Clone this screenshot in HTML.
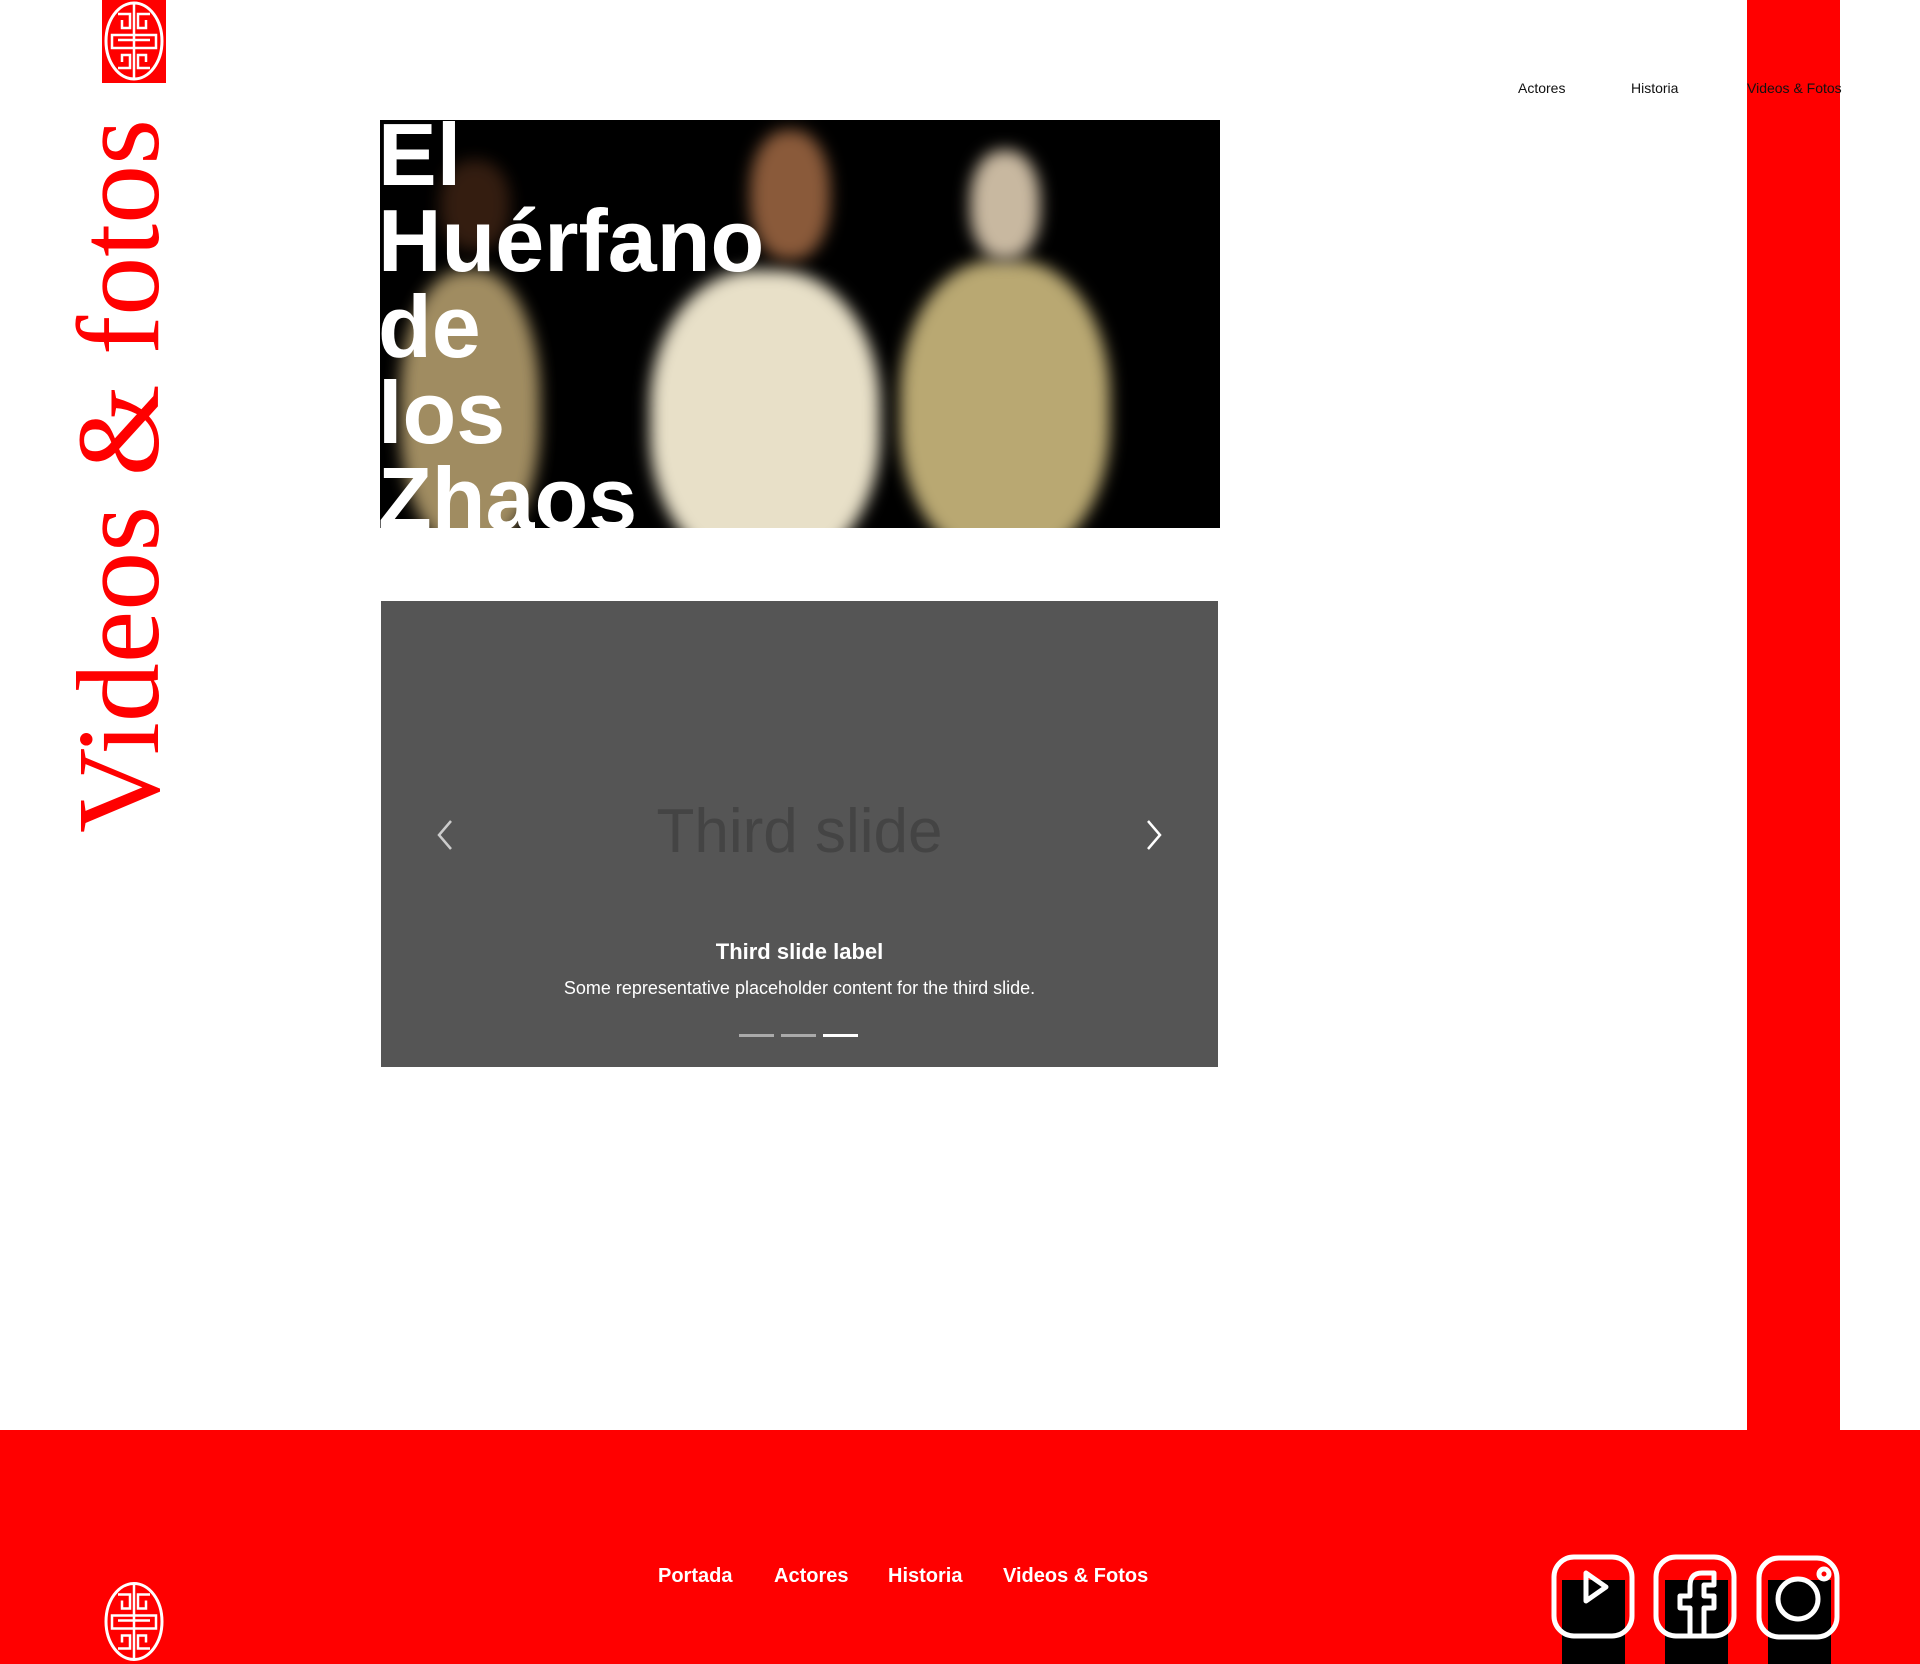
<!DOCTYPE html>
<html><head><meta charset="utf-8"><style>
*{margin:0;padding:0;box-sizing:border-box}
body{width:1920px;height:1664px;position:relative;background:#fff;overflow:hidden;font-family:"Liberation Sans",sans-serif}
.abs{position:absolute}
.redbar{left:1747px;top:0;width:93px;height:1430px;background:#f00}
.nav{top:80px;font-size:14px;color:#111}
.vt{left:73px;top:833px;transform-origin:0 0;transform:rotate(-90deg);font-family:"Liberation Serif",serif;color:#f00;font-size:118px;white-space:nowrap;line-height:92px;width:720px}
.hero{left:380px;top:120px;width:840px;height:408px;background:#000;overflow:hidden}
.blob{position:absolute;border-radius:45%;filter:blur(8px)}
.title{left:378px;top:112px;color:#fff;font-weight:bold;font-size:88px;line-height:86px;letter-spacing:0}
.car{left:381px;top:601px;width:837px;height:466px;background:#555}
.footer{left:0;top:1430px;width:1920px;height:234px;background:#f00}
.fl{top:1565px;color:#fff;font-weight:bold;font-size:20px}
.blk{top:1580px;width:63px;height:84px;background:#000}
</style></head><body>
<div class="abs redbar"></div>
<div class="abs nav" style="left:1518px">Actores</div>
<div class="abs nav" style="left:1631px">Historia</div>
<div class="abs nav" style="left:1747px">Videos &amp; Fotos</div>

<svg class="abs" style="left:102px;top:0" width="64" height="83" viewBox="0 0 64 83">
<rect width="64" height="83" fill="#f00"/>
<ellipse cx="32" cy="41" rx="28" ry="38" fill="none" stroke="#fff" stroke-width="3"/>
<path d="M32 4V78M10 35H54V48H10ZM16 40H48M16 14H28V28H20V20M48 14H36V28H44V20M16 68H28V55H20V62M48 68H36V55H44V62" fill="none" stroke="#fff" stroke-width="2.5"/>
</svg>
<div class="abs vt">Videos &amp; fotos</div>

<div class="abs hero">
<div class="blob" style="left:20px;top:150px;width:140px;height:280px;background:#c9b07a;opacity:.8"></div>
<div class="blob" style="left:60px;top:40px;width:70px;height:90px;background:#4a2a18;opacity:.7"></div>
<div class="blob" style="left:270px;top:150px;width:230px;height:300px;background:#e8e0c8"></div>
<div class="blob" style="left:370px;top:10px;width:80px;height:130px;background:#8a5a3a"></div>
<div class="blob" style="left:520px;top:140px;width:210px;height:300px;background:#b9a872"></div>
<div class="blob" style="left:590px;top:30px;width:70px;height:110px;background:#c8b8a0"></div>
</div>
<div class="abs title">El<br>Huérfano<br>de<br>los<br>Zhaos</div>

<div class="abs car">
<div class="abs" style="left:0;width:837px;top:195px;text-align:center;font-size:62px;color:#444">Third slide</div>
<svg class="abs" style="left:50px;top:214px" width="30" height="40"><path d="M20 6L8 20L20 34" fill="none" stroke="#ccc" stroke-width="2.5"/></svg>
<svg class="abs" style="left:757px;top:214px" width="30" height="40"><path d="M10 6L22 20L10 34" fill="none" stroke="#fff" stroke-width="2.5"/></svg>
<div class="abs" style="left:0;width:837px;top:338px;text-align:center;font-size:22px;font-weight:bold;color:#fff">Third slide label</div>
<div class="abs" style="left:0;width:837px;top:377px;text-align:center;font-size:18px;color:#fff">Some representative placeholder content for the third slide.</div>
<div class="abs" style="left:358px;top:433px;width:35px;height:3px;background:#aaa"></div>
<div class="abs" style="left:400px;top:433px;width:35px;height:3px;background:#aaa"></div>
<div class="abs" style="left:442px;top:433px;width:35px;height:3px;background:#fff"></div>
</div>

<div class="abs footer"></div>
<div class="abs fl" style="left:658px">Portada</div>
<div class="abs fl" style="left:774px">Actores</div>
<div class="abs fl" style="left:888px">Historia</div>
<div class="abs fl" style="left:1003px">Videos &amp; Fotos</div>
<svg class="abs" style="left:102px;top:1580px" width="64" height="84" viewBox="0 0 64 83">
<rect width="64" height="83" fill="#f00"/>
<ellipse cx="32" cy="41" rx="28" ry="38" fill="none" stroke="#fff" stroke-width="3"/>
<path d="M32 4V78M10 35H54V48H10ZM16 40H48M16 14H28V28H20V20M48 14H36V28H44V20M16 68H28V55H20V62M48 68H36V55H44V62" fill="none" stroke="#fff" stroke-width="2.5"/>
</svg>
<div class="abs blk" style="left:1562px"></div>
<div class="abs blk" style="left:1665px"></div>
<div class="abs blk" style="left:1768px"></div>
<svg class="abs" style="left:1550px;top:1553px" width="295" height="90">
<g fill="none" stroke="#fff" stroke-width="5" stroke-linejoin="round">
<rect x="4" y="4" width="78" height="79" rx="20"/>
<path d="M36 20V48L56 34Z"/>
<rect x="106" y="4" width="78" height="79" rx="20"/>
<path d="M140 83V55H130V43H140V33Q140 20 152 20H164V32H154V43H164V55H154V83"/>
<rect x="209" y="5" width="78" height="79" rx="20"/>
<circle cx="248" cy="46" r="20"/>
<circle cx="274" cy="21" r="5"/>
</g></svg>
</body></html>
